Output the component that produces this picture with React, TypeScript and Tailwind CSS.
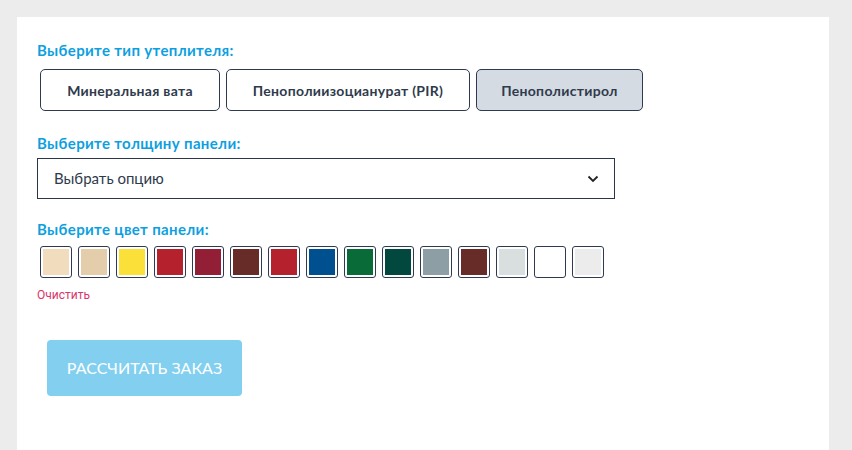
import React, { useState } from "react";

const INSULATIONS = [
  { name: "Минеральная вата", w: "w-[180px]" },
  { name: "Пенополиизоцианурат (PIR)", w: "w-[244px]" },
  { name: "Пенополистирол", w: "w-[167px]" },
];

const COLORS = [
  "#f1dcbd",
  "#e3cdab",
  "#fbe039",
  "#b5212d",
  "#921f36",
  "#672c28",
  "#b5212d",
  "#00508f",
  "#096b38",
  "#03483f",
  "#8e9ea5",
  "#672c28",
  "#d9dfdf",
  "#ffffff",
  "#ececec",
];

const headingFont = { fontFamily: "Lato, 'Noto Sans', sans-serif" };

export default function App() {
  const [insulation, setInsulation] = useState(2);
  const [color, setColor] = useState<number | null>(null);

  return (
    <div className="h-[450px] w-[852px] overflow-hidden bg-[#ebeceb] pl-[17px] pt-[17px]">
      <div className="h-[440px] w-[812px] bg-white px-5 pt-[22px]" style={headingFont}>
        <h3 className="text-[15px] font-bold leading-[22px] tracking-[0.35px] text-[#0d9fe0]">
          Выберите тип утеплителя:
        </h3>
        <div className="mt-2 ml-[3px] flex gap-[6px]">
          {INSULATIONS.map((item, idx) => (
            <button
              key={item.name}
              type="button"
              onClick={() => setInsulation(idx)}
              className={
                idx === insulation
                  ? `h-[42px] ${item.w} rounded-[5px] border border-[#2e3a4f] bg-[#d5dbe3] text-[14px] font-bold tracking-[0.3px] text-[#2f3a4c]`
                  : `h-[42px] ${item.w} rounded-[5px] border border-[#2e3a4f] bg-white text-[14px] font-bold tracking-[0.3px] text-[#2f3a4c]`
              }
            >
              {item.name}
            </button>
          ))}
        </div>

        <h3 className="mt-[21px] text-[15px] font-bold leading-[22px] tracking-[0.35px] text-[#0d9fe0]">
          Выберите толщину панели:
        </h3>
        <div className="mt-1 flex h-[41px] w-[578px] items-center justify-between border border-[#2a3548] pl-4 pr-[15px]">
          <span className="text-[15px] text-[#2f3a4c]">Выбрать опцию</span>
          <svg width="12" height="8" viewBox="0 0 12 8" fill="none">
            <path d="M1.5 1.5 6 6l4.5-4.5" stroke="#222" strokeWidth="1.8" />
          </svg>
        </div>

        <h3 className="mt-[19px] text-[15px] font-bold leading-[22px] tracking-[0.35px] text-[#0d9fe0]">
          Выберите цвет панели:
        </h3>
        <div className="mt-[6px] ml-[3px] flex gap-[6px]">
          {COLORS.map((c, idx) => (
            <button
              key={idx}
              type="button"
              onClick={() => setColor(idx)}
              className={
                idx === color
                  ? "h-[32px] w-[32px] rounded-[3px] border-2 border-[#0d9fe0] bg-white p-[1px]"
                  : "h-[32px] w-[32px] rounded-[3px] border border-[#2e3a4f] bg-white p-[2px]"
              }
            >
              <span className="block h-full w-full" style={{ backgroundColor: c }} />
            </button>
          ))}
        </div>
        <button
          type="button"
          onClick={() => setColor(null)}
          className="mt-[9px] block text-[12px] leading-4 text-[#d9346b]"
          style={{ fontFamily: "Roboto, sans-serif" }}
        >
          Очистить
        </button>

        <button
          type="button"
          className="mt-[37px] ml-[10px] h-[56px] w-[195px] rounded-[4px] bg-[#82cff0] text-[16px] uppercase text-white"
        >
          Рассчитать заказ
        </button>
      </div>
    </div>
  );
}
